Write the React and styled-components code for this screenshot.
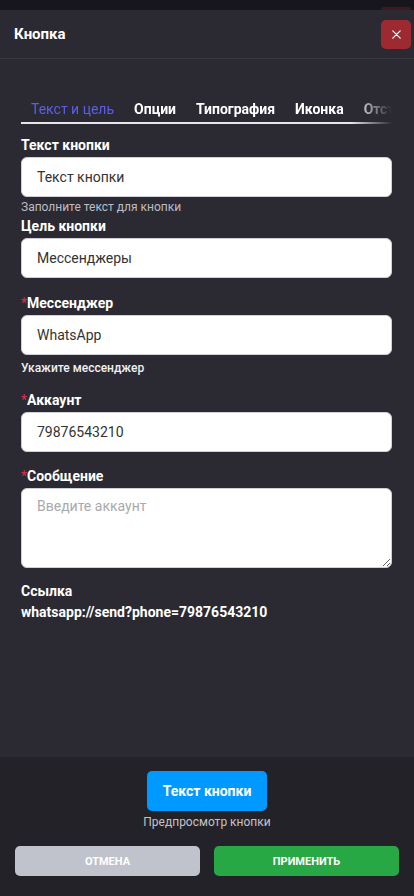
import React, { useState } from "react";
import styled, { createGlobalStyle } from "styled-components";

const GlobalStyle = createGlobalStyle`
  html, body { margin: 0; padding: 0; height: 100%; }
  body {
    background: #17161c;
    font-family: Roboto, "Noto Sans", "Liberation Sans", sans-serif;
    -webkit-font-smoothing: antialiased;
  }
  #root { height: 100%; }
  * { box-sizing: border-box; }
`;

const tabs = ["Текст и цель", "Опции", "Типография", "Иконка", "Отступы"];

function App() {
  const [active, setActive] = useState(0);
  const [account, setAccount] = useState("79876543210");

  return (
    <>
      <GlobalStyle />
      <Screen>
        <Backdrop>
          <GhostButton />
        </Backdrop>
        <Modal>
          <Header>
            <Title>Кнопка</Title>
            <CloseButton aria-label="Закрыть">
              <svg width="9" height="9" viewBox="0 0 9 9">
                <path d="M0.8 0.8L8.2 8.2M8.2 0.8L0.8 8.2" stroke="#fff" strokeWidth="1.2" strokeLinecap="round" />
              </svg>
            </CloseButton>
          </Header>

          <Body>
            <Tabs>
              {tabs.map((t, i) => (
                <Tab key={t} $active={i === active} onClick={() => setActive(i)}>
                  {t}
                </Tab>
              ))}
            </Tabs>

            <Field $space={4}>
              <Label>Текст кнопки</Label>
              <Input defaultValue="Текст кнопки" />
              <Hint>Заполните текст для кнопки</Hint>
            </Field>

            <Field $space={17}>
              <Label>Цель кнопки</Label>
              <Input defaultValue="Мессенджеры" />
            </Field>

            <Field $space={17}>
              <Label><Req>*</Req>Мессенджер</Label>
              <Input defaultValue="WhatsApp" />
              <Hint $strong>Укажите мессенджер</Hint>
            </Field>

            <Field $space={16}>
              <Label><Req>*</Req>Аккаунт</Label>
              <Input value={account} onChange={(e) => setAccount(e.target.value)} />
            </Field>

            <Field $space={15}>
              <Label><Req>*</Req>Сообщение</Label>
              <TextArea placeholder="Введите аккаунт" />
            </Field>

            <LinkBlock>
              <Label>Ссылка</Label>
              <LinkText>whatsapp://send?phone={account}</LinkText>
            </LinkBlock>
          </Body>

          <Footer>
            <PreviewButton>Текст кнопки</PreviewButton>
            <PreviewCaption>Предпросмотр кнопки</PreviewCaption>
            <Actions>
              <ActionButton $variant="cancel">Отмена</ActionButton>
              <ActionButton $variant="apply">Применить</ActionButton>
            </Actions>
          </Footer>
        </Modal>
      </Screen>
    </>
  );
}

const Screen = styled.div`
  height: 100vh;
  display: flex;
  flex-direction: column;
  overflow: hidden;
`;

const Backdrop = styled.div`
  height: 10px;
  flex-shrink: 0;
  display: flex;
  justify-content: flex-end;
  align-items: flex-end;
  padding-right: 3px;
  background: #17161c;
`;

const GhostButton = styled.div`
  width: 30px;
  height: 3px;
  border-radius: 4px 4px 0 0;
  background: #3f1a20;
`;

const Modal = styled.div`
  flex: 1;
  display: flex;
  flex-direction: column;
  background: #2b2a33;
  min-height: 0;
`;

const Header = styled.div`
  height: 49px;
  flex-shrink: 0;
  display: flex;
  align-items: center;
  justify-content: space-between;
  padding: 0 3px 0 14px;
  border-bottom: 1px solid #3a3942;
`;

const Title = styled.h2`
  margin: 0;
  color: #fff;
  font-size: 15px;
  font-weight: 700;
`;

const CloseButton = styled.button`
  width: 30px;
  height: 29px;
  border: none;
  border-radius: 5px;
  background: #9c2a30;
  display: flex;
  align-items: center;
  justify-content: center;
  padding: 0;
  cursor: pointer;
`;

const Body = styled.div`
  flex: 1;
  padding: 38px 22px 0 21px;
  overflow: hidden;
`;

const Tabs = styled.div`
  display: flex;
  white-space: nowrap;
  overflow: hidden;
  border-bottom: 2px solid #e6e6ea;
  margin-bottom: 13px;
  -webkit-mask-image: linear-gradient(to right, #000 0, #000 89%, transparent 100%);
  mask-image: linear-gradient(to right, #000 0, #000 89%, transparent 100%);
`;

const Tab = styled.div`
  flex-shrink: 0;
  padding: 3px 10px 4px;
  margin-bottom: -2px;
  font-size: 14px;
  line-height: 18px;
  font-weight: ${(p) => (p.$active ? 400 : 700)};
  color: ${(p) => (p.$active ? "#5b5fe8" : "#fff")};
  border-bottom: 2px solid ${(p) => (p.$active ? "#5b5fe8" : "transparent")};
  cursor: pointer;
`;

const Field = styled.div`
  display: flex;
  flex-direction: column;
  margin-bottom: ${(p) => p.$space}px;
`;

const Label = styled.label`
  display: block;
  color: #fff;
  font-size: 14px;
  line-height: 17px;
  font-weight: 700;
  margin-bottom: 3px;
`;

const Req = styled.span`
  color: #d9304a;
  font-weight: 400;
`;

const Input = styled.input`
  height: 40px;
  width: 100%;
  border: 1px solid #cfd0d6;
  border-radius: 6px;
  background: #fff;
  padding: 0 15px;
  font-family: inherit;
  font-size: 14px;
  color: #333;
  outline: none;
`;

const TextArea = styled.textarea`
  height: 80px;
  width: 100%;
  border: 1px solid #cfd0d6;
  border-radius: 6px;
  background: #fff;
  padding: 9px 15px;
  font-family: inherit;
  font-size: 14px;
  color: #333;
  outline: none;
  resize: vertical;
  &::placeholder { color: #a9a9ae; }
`;

const Hint = styled.div`
  margin-top: ${(p) => (p.$strong ? 6 : 3)}px;
  font-size: 12px;
  line-height: 14px;
  color: ${(p) => (p.$strong ? "#f0f0f2" : "#bdbdc2")};
  font-weight: ${(p) => (p.$strong ? 500 : 400)};
`;

const LinkBlock = styled.div`
  display: flex;
  flex-direction: column;
`;

const LinkText = styled.div`
  color: #fff;
  font-size: 14px;
  line-height: 18px;
  font-weight: 700;
`;

const Footer = styled.div`
  flex-shrink: 0;
  background: #232228;
  display: flex;
  flex-direction: column;
  align-items: center;
  padding: 14px 15px 20px;
`;

const PreviewButton = styled.button`
  width: 120px;
  height: 40px;
  border: none;
  border-radius: 5px;
  background: #0099ff;
  color: #fff;
  font-family: inherit;
  font-size: 14px;
  font-weight: 700;
  cursor: pointer;
`;

const PreviewCaption = styled.div`
  margin-top: 4px;
  font-size: 12px;
  line-height: 15px;
  color: #c4c4c8;
`;

const Actions = styled.div`
  margin-top: 16px;
  width: 100%;
  display: grid;
  grid-template-columns: 1fr 1fr;
  gap: 14px;
`;

const ActionButton = styled.button`
  height: 30px;
  border: none;
  border-radius: 5px;
  background: ${(p) => (p.$variant === "apply" ? "#28a745" : "#c0c2cc")};
  color: #fff;
  font-family: inherit;
  font-size: 11px;
  font-weight: 700;
  text-transform: uppercase;
  cursor: pointer;
`;

export default App;
